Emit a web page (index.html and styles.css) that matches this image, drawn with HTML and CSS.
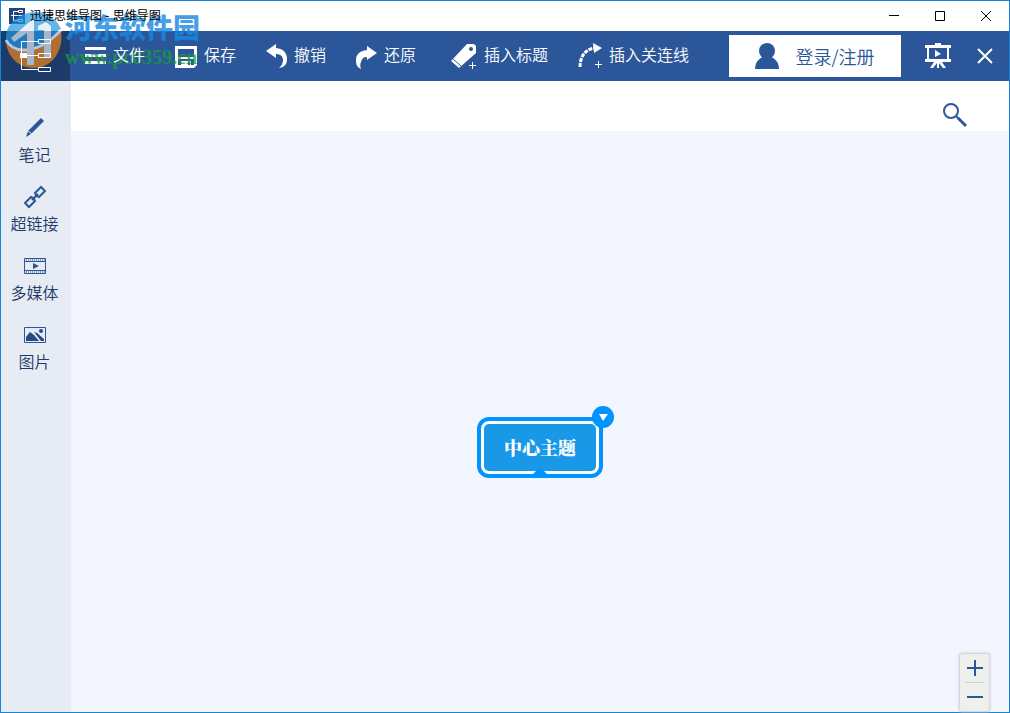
FILE: index.html
```html
<!DOCTYPE html>
<html lang="zh-CN">
<head>
<meta charset="utf-8">
<title>迅捷思维导图 - 思维导图</title>
<link rel="stylesheet" href="styles.css">
</head>
<body>
<div class="window">
  <header class="titlebar">
    <svg class="app-icon" width="16" height="16" viewBox="0 0 16 16"><path fill="#1f4580" d="M0 0h16v16H0z"/><path fill="none" stroke="#fff" d="M9 3.500H4.500v9H9M2 7.500h7M9.500 2.500h4v2h-4zM9.500 7.500h4M9.500 11.500h4v2h-4z"/></svg>
    <h1 class="title">迅捷思维导图 - 思维导图</h1>
    <div class="caption-buttons">
      <button class="caption" aria-label="最小化"><svg width="12" height="12" viewBox="0 0 12 12"><path d="M1 5.500h10"/></svg></button>
      <button class="caption" aria-label="最大化"><svg width="12" height="12" viewBox="0 0 12 12"><path d="M1.500 1.500h9v9h-9z"/></svg></button>
      <button class="caption" aria-label="关闭窗口"><svg width="12" height="12" viewBox="0 0 12 12"><path d="M1 1l10 10M11 1L1 11"/></svg></button>
    </div>
  </header>

  <nav class="toolbar">
    <div class="logo"><svg width="32" height="34" viewBox="0 0 32 34"><path fill="none" stroke="#fff" d="M18 2.500H1.500v28H18M0 16.500h18M18.500.500h12v4h-12zM18.500 14.500h12v4h-12zM18.500 28.500h12v4h-12z"/><path fill="#fff" d="M0 14h7v5H0z"/></svg></div>
    <div class="tools">
      <div class="tool-group">
        <button class="tool"><svg width="21" height="26" viewBox="0 0 21 26"><path fill="#fff" d="M0 4h21v3H0zM0 11h21v3H0zM0 18h21v3H0z"/></svg><span>文件</span></button>
        <button class="tool"><svg width="22" height="26" viewBox="0 0 22 26"><path fill="#fff" fill-rule="evenodd" d="M0 3h22v19l-3 3H0zM3 6v8h16V6zM3 16v6h3v-4h10v4h3v-6zM13 19v3h2v-3z"/></svg><span>保存</span></button>
        <button class="tool"><svg width="21" height="26" viewBox="0 0 21 26"><path fill="#fff" d="M0 8L10 1v4c8 1 11 5 11 11 0 5-2 8-8 9 3-3 4-5 4-8 0-4-3-6-7-6v4z"/></svg><span>撤销</span></button>
        <button class="tool"><svg width="21" height="26" viewBox="0 0 21 26"><path fill="#fff" d="M21 10L11 3v4C3 8 0 12 0 17c0 5 1 7 5 9-1-3-1-5 0-7 1-4 3-5 6-5v3z"/></svg><span>还原</span></button>
      </div>
      <div class="tool-group">
        <button class="tool"><svg width="26" height="26" viewBox="0 0 26 26"><path fill="#fff" fill-rule="evenodd" d="M16 1h7l2 2v7L8 25 0 18zM20 4a2 2 0 100 4 2 2 0 000-4z"/><path stroke="#2b579a" d="M2 16l8 7"/><path stroke="#fff" d="M18 22.500h7M21.500 19v7"/></svg><span>插入标题</span></button>
        <button class="tool"><svg width="24" height="26" viewBox="0 0 24 26"><path fill="none" stroke="#fff" stroke-width="3" stroke-dasharray="4 1" d="M2 24C2 14 7 6 17 5"/><path fill="#fff" d="M15 0l9 5-8 5z"/><path stroke="#fff" d="M17 21.500h7M20.500 18v7"/></svg><span>插入关连线</span></button>
      </div>
    </div>
    <button class="login"><svg width="24" height="26" viewBox="0 0 24 26"><circle cx="12" cy="8" r="8"/><path d="M8 13h8c0 2 8 3 8 13H0C0 16 8 15 8 13z"/></svg><span>登录/注册</span></button>
    <button class="nav-icon" aria-label="演示"><svg width="26" height="26" viewBox="0 0 26 26"><path fill="#fff" fill-rule="evenodd" d="M0 2h10V0h6v2h10v3h-2v11h2v3h-9l4 6h-3l-4-5v5h-2v-5l-4 5H5l4-6H0v-3h2V5H0zM4 5v11h18V5z"/><path fill="#fff" d="M10 7l6 4-6 3z"/></svg></button>
    <button class="nav-icon close-doc" aria-label="关闭"><svg width="16" height="16" viewBox="0 0 16 16"><path stroke="#fff" stroke-width="2" d="M1 1l14 14M15 1L1 15"/></svg></button>
  </nav>

  <div class="workspace">
    <aside class="sidebar">
      <button class="side-item"><svg width="24" height="24" viewBox="0 0 24 24"><path fill="#2b579a" d="M18 2l3 3L8 18l-5 3 2-6z"/><path stroke="#e7ebf4" d="M5 15l4 3"/></svg><span>笔记</span></button>
      <button class="side-item"><svg width="24" height="24" viewBox="0 0 24 24"><path fill="none" stroke="#2b579a" stroke-width="2" d="M13 10l-1-2 6-6 4 4-6 6-2-1M10 13l-2-1-6 6 4 4 6-6-1-2M9 15l6-6"/></svg><span>超链接</span></button>
      <button class="side-item"><svg width="24" height="24" viewBox="0 0 24 24"><path fill="none" stroke="#2b579a" d="M1.500 4.500h21v15h-21zM1 7.500h22M1 16.500h22"/><path fill="none" stroke="#2b579a" stroke-dasharray="1 1" d="M3 6h19M3 18h19"/><path fill="#2b579a" d="M10 9l6 3-6 3z"/></svg><span>多媒体</span></button>
      <button class="side-item"><svg width="24" height="24" viewBox="0 0 24 24"><path fill="none" stroke="#2b579a" d="M1.500 4.500h21v15h-21z"/><path fill="#264b85" d="M3 18v-4l4-5 4 3 5 6zM11 9l3 1 7 6v2h-3z"/><circle cx="18" cy="8" r="2" fill="#264b85"/></svg><span>图片</span></button>
    </aside>
    <main class="main">
      <div class="searchbar"><button class="search" aria-label="搜索"><svg width="26" height="26" viewBox="0 0 26 26"><circle cx="9" cy="9" r="7" fill="none" stroke="#2b579a" stroke-width="2"/><path stroke="#2b579a" stroke-width="2" d="M14 14l3 3"/><path stroke="#2b579a" stroke-width="3" d="M16 16l8 8"/></svg></button></div>
      <section class="canvas">
        <div class="node">
          <div class="node-body">中心主题</div>
          <svg class="node-caret" width="14" height="6" viewBox="0 0 14 6"><path fill="#0094ff" d="M0 6l5-5q2-2 4 0l5 5z"/></svg>
          <button class="node-menu" aria-label="展开菜单"><svg width="10" height="8" viewBox="0 0 10 8"><path fill="#fff" d="M1 1h9L5 8z"/></svg></button>
        </div>
        <div class="zoom">
          <button class="zoom-button" aria-label="放大"><svg width="16" height="16" viewBox="0 0 16 16"><path d="M0 8h16M8 0v16"/></svg></button>
          <button class="zoom-button" aria-label="缩小"><svg width="16" height="16" viewBox="0 0 16 16"><path d="M0 8h16"/></svg></button>
        </div>
      </section>
    </main>
  </div>

  <div class="watermark">
    <svg width="58" height="58" viewBox="0 0 58 58">
      <path fill="#ee861c" d="M1 33c9 10 23 8 35 1 9-5 15-9 20-14 3 20-9 37-27 37C14 57 4 47 1 33z"/>
      <path fill="#2196e3" d="M1 30C-1 14 14 1 31 1c10 0 20 6 25 17-6 6-12 10-20 15-12 7-27 8-35-3z"/>
      <path fill="none" stroke="#fff" stroke-width="3" d="M1 29c2 5 9 11 20 10 14-1 27-11 35-20"/>
      <path fill="#e4ebf3" d="M6 27L29 7v47h-7V22L9 31zM33 15l8-4 5 4v31h-7V19h-6z"/>
    </svg>
    <div class="watermark-text"><span class="watermark-name">河东软件园</span><span class="watermark-site">www.pc0359.cn</span></div>
  </div>
</div>
</body>
</html>
```
FILE: styles.css
```css
* { box-sizing: border-box; }
body { margin: 0; font-family: "Liberation Sans", "Noto Sans CJK SC", sans-serif; }
button { margin: 0; padding: 0; border: 0; background: none; font: inherit; color: inherit; }
svg { display: block; flex: none; }

.window { position: relative; display: flex; flex-direction: column; min-height: 100vh; border: 1px solid #1883d7; background: #fff; }

.titlebar { display: flex; align-items: center; height: 30px; padding-left: 8px; }
.title { z-index: 2; flex: 1; margin: 0 0 0 5px; font-size: 12px; font-weight: 400; line-height: 16px; color: #000; }
.caption-buttons { display: flex; }
.caption { display: grid; place-items: center; width: 46px; height: 28px; }
.caption path { fill: none; stroke: #000; }

.toolbar { display: flex; align-items: center; height: 50px; background: #2b579a; color: #fff; }
.logo { display: grid; place-items: center; width: 69px; height: 50px; background: #1d3b69; }
.logo svg { z-index: 2; }
.tools { display: flex; flex: 1; gap: 35px; padding-left: 15px; }
.tool-group { display: flex; gap: 30px; }
.tool { display: flex; align-items: center; gap: 7px; font-size: 16px; font-weight: 350; line-height: 26px; white-space: nowrap; }
.tool span { z-index: 2; }
.login { display: flex; align-items: center; justify-content: center; gap: 16px; width: 172px; height: 42px; background: #fff; color: #2b579a; font-family: "Noto Sans CJK SC", sans-serif; font-size: 18px; font-weight: 350; line-height: 26px; white-space: nowrap; }
.login svg { fill: #2b579a; }
.nav-icon { margin-left: 24px; }
.close-doc { margin: 0 16px 0 26px; }

.workspace { display: flex; flex: 1; }
.sidebar { display: flex; flex-direction: column; gap: 18px; width: 70px; padding-top: 35px; background: #e7ebf4; color: #1d3b69; }
.side-item { display: flex; flex-direction: column; align-items: center; gap: 5px; padding-right: 3px; font-size: 16px; font-weight: 350; line-height: 22px; }
.main { display: flex; flex: 1; flex-direction: column; }
.searchbar { display: flex; justify-content: flex-end; height: 50px; padding: 21px 41px 0 0; }
.search { height: 26px; }

.canvas { position: relative; flex: 1; background: #f3f6ff; }
.node { position: absolute; left: 50%; top: 286px; transform: translateX(-50%); padding: 3px; border: 4px solid #0094ff; border-radius: 12px; background: #fff; }
.node-body { padding: 0 20px; border-radius: 5px; background: #1a98e8; color: #fff; font-family: "Noto Serif CJK SC", "Noto Sans CJK SC", serif; font-size: 18px; font-weight: 900; line-height: 47px; white-space: nowrap; }
.node-caret { position: absolute; left: 52px; bottom: 0; }
.node-menu { position: absolute; top: -15px; right: -15px; display: grid; place-items: center; width: 22px; height: 22px; border-radius: 50%; background: #0094ff; }

.zoom { position: absolute; right: 19px; bottom: 0; width: 31px; padding: 0 5px 1px; border: 1px solid #d5d7dd; border-radius: 3px; background: #eef0ec; box-shadow: 0 0 3px #c8cbd8; }
.zoom-button { display: grid; place-items: center; width: 100%; height: 28px; }
.zoom-button + .zoom-button { border-top: 1px solid #d0d1ce; }
.zoom-button path { stroke: #2b579a; stroke-width: 2; }

.watermark { position: absolute; z-index: 1; top: 10px; left: 4px; display: flex; gap: 2px; pointer-events: none; }
.watermark > svg { opacity: 0.7; }
.watermark-text { display: flex; flex-direction: column; white-space: nowrap; }
.watermark-name { color: #1788e0; font-size: 27px; font-weight: 900; line-height: 36px; opacity: 0.8; }
.watermark-site { color: #1c9c3c; font-family: "Liberation Serif", serif; font-size: 20px; font-weight: 700; line-height: 20px; opacity: 0.75; }
```
